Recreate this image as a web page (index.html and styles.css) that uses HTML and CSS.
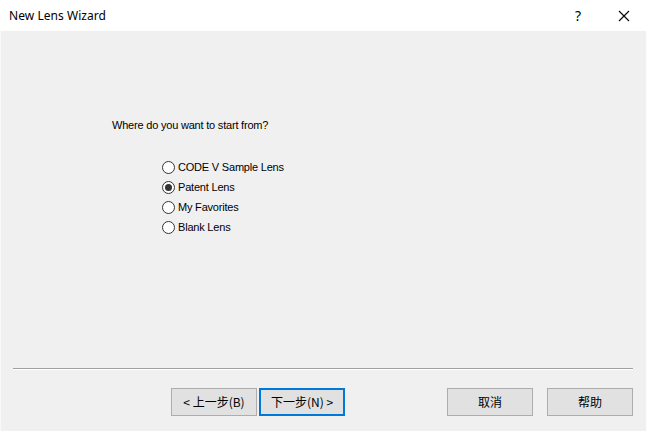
FILE: index.html
```html
<!DOCTYPE html>
<html>
<head>
<meta charset="utf-8">
<link rel="stylesheet" href="styles.css">
</head>
<body>
<div class="window">
  <div class="titlebar">
    <span class="title">New Lens Wizard</span>
    <span class="help-btn">?</span>
    <span class="close-btn">
      <svg width="12" height="12" viewBox="0 0 12 12"><path d="M1 1L11 11M11 1L1 11" stroke="#000" stroke-width="1.1" fill="none"/></svg>
    </span>
  </div>
  <div class="content">
    <div class="main">
      <div class="question">Where do you want to start from?</div>
      <div class="options">
        <div class="opt"><span class="radio"></span><span class="label">CODE V Sample Lens</span></div>
        <div class="opt"><span class="radio checked"></span><span class="label">Patent Lens</span></div>
        <div class="opt"><span class="radio"></span><span class="label">My Favorites</span></div>
        <div class="opt"><span class="radio"></span><span class="label">Blank Lens</span></div>
      </div>
    </div>
    <div class="separator"></div>
    <div class="footer">
      <button class="btn">&lt; 上一步(B)</button>
      <button class="btn focused">下一步(N) &gt;</button>
      <span class="spacer"></span>
      <button class="btn">取消</button>
      <button class="btn last">帮助</button>
    </div>
  </div>
</div>
</body>
</html>
```
FILE: styles.css
```css
html, body {
  margin: 0;
  padding: 0;
}
body {
  width: 647px;
  height: 431px;
  overflow: hidden;
  background: #f0f0f0;
}
.window {
  width: 647px;
  height: 431px;
  display: flex;
  flex-direction: column;
}
.titlebar {
  height: 31px;
  background: #fff;
  display: flex;
  align-items: center;
  font-family: "Noto Sans", "Liberation Sans", sans-serif;
  font-size: 12px;
  color: #000;
}
.title {
  padding-left: 9px;
  flex: 1;
  letter-spacing: 0.05px;
}
.help-btn {
  width: 46px;
  text-align: center;
  font-size: 14px;
}
.close-btn {
  width: 46px;
  height: 31px;
  display: flex;
  align-items: center;
  justify-content: center;
}
.content {
  flex: 1;
  display: flex;
  flex-direction: column;
  background: #f0f0f0;
  border-left: 1px solid #f9f9f9;
  border-right: 1px solid #fcfcfc;
}
.main {
  flex: 1;
  padding-top: 88px;
  padding-left: 111px;
  font-family: "Liberation Sans", Arial, sans-serif;
  font-size: 11px;
  letter-spacing: -0.2px;
  color: #000;
}
.question {
  line-height: 13px;
}
.options {
  margin-top: 25px;
  padding-left: 50px;
  display: flex;
  flex-direction: column;
}
.opt {
  height: 20px;
  display: flex;
  align-items: center;
}
.radio {
  width: 11px;
  height: 11px;
  border: 1px solid #333;
  border-radius: 50%;
  background: #fff;
  display: flex;
  align-items: center;
  justify-content: center;
  margin-right: 3px;
}
.radio.checked::after {
  content: "";
  width: 7px;
  height: 7px;
  border-radius: 50%;
  background: #333;
}
.separator {
  height: 1px;
  background: #a0a0a0;
  border-bottom: 1px solid #fff;
  margin: 0 13px 0 12px;
}
.footer {
  display: flex;
  padding: 18px 13px 15px 170px;
}
.spacer {
  flex: 1;
}
.btn {
  width: 86px;
  height: 28px;
  box-sizing: border-box;
  border: 1px solid #adadad;
  background: #e1e1e1;
  font-family: "Noto Sans CJK SC", "Liberation Sans", sans-serif;
  font-size: 12px;
  color: #000;
  padding: 0;
  margin: 0;
  line-height: 1;
}
.btn.focused {
  border: 2px solid #0078d7;
  margin-left: 2px;
}
.btn.last {
  margin-left: 14px;
}
```
